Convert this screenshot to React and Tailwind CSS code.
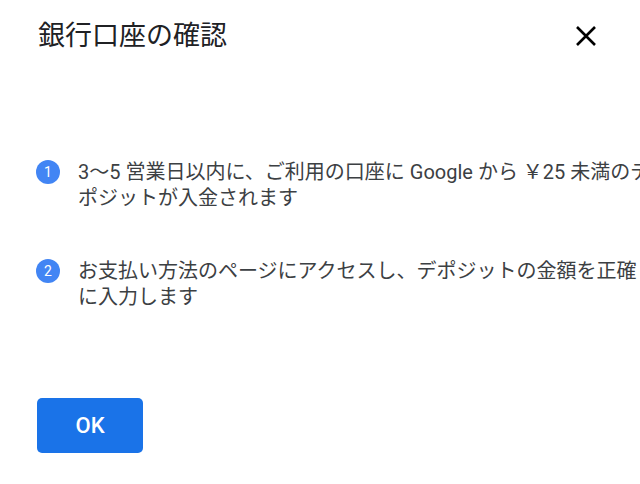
const steps = [
    ["3〜5 営業日以内に、ご利用の口座に Google から ￥25 未満のデ", "ポジットが入金されます"],
    ["お支払い方法のページにアクセスし、デポジットの金額を正確", "に入力します"],
];

const App = () => {
    return (
        <div
            className="w-[640px] h-[484px] overflow-hidden bg-white"
            style={{ fontFamily: 'Roboto, "Noto Sans CJK JP", sans-serif' }}
        >
            <div className="flex items-center justify-between pl-[38px] pr-[42px] pt-[18px]">
                <h1 className="text-[27px] leading-[36px] text-[#202124]">銀行口座の確認</h1>
                <button className="w-[24px] h-[24px] flex items-center justify-center">
                    <svg width="22" height="22" viewBox="0 0 22 22">
                        <path d="M2 2L20 20M20 2L2 20" stroke="#000" strokeWidth="2.6" />
                    </svg>
                </button>
            </div>

            <div className="mt-[105px] pl-[36px] flex flex-col gap-[47px]">
                {steps.map((lines, i) => (
                    <div key={i} className="flex items-start gap-[18px]">
                        <div className="mt-[1px] w-[24px] h-[24px] shrink-0 rounded-full bg-[#4285f4] text-white text-[14px] flex items-center justify-center">
                            {i + 1}
                        </div>
                        <p className="text-[20px] leading-[26px] text-[#3c4043] whitespace-nowrap">
                            {lines[0]}
                            <br />
                            {lines[1]}
                        </p>
                    </div>
                ))}
            </div>

            <div className="mt-[88px] pl-[37px]">
                <button className="w-[106px] h-[55px] rounded-[5px] bg-[#1a73e8] text-white text-[22px] font-medium">
                    OK
                </button>
            </div>
        </div>
    );
};

export default App;
